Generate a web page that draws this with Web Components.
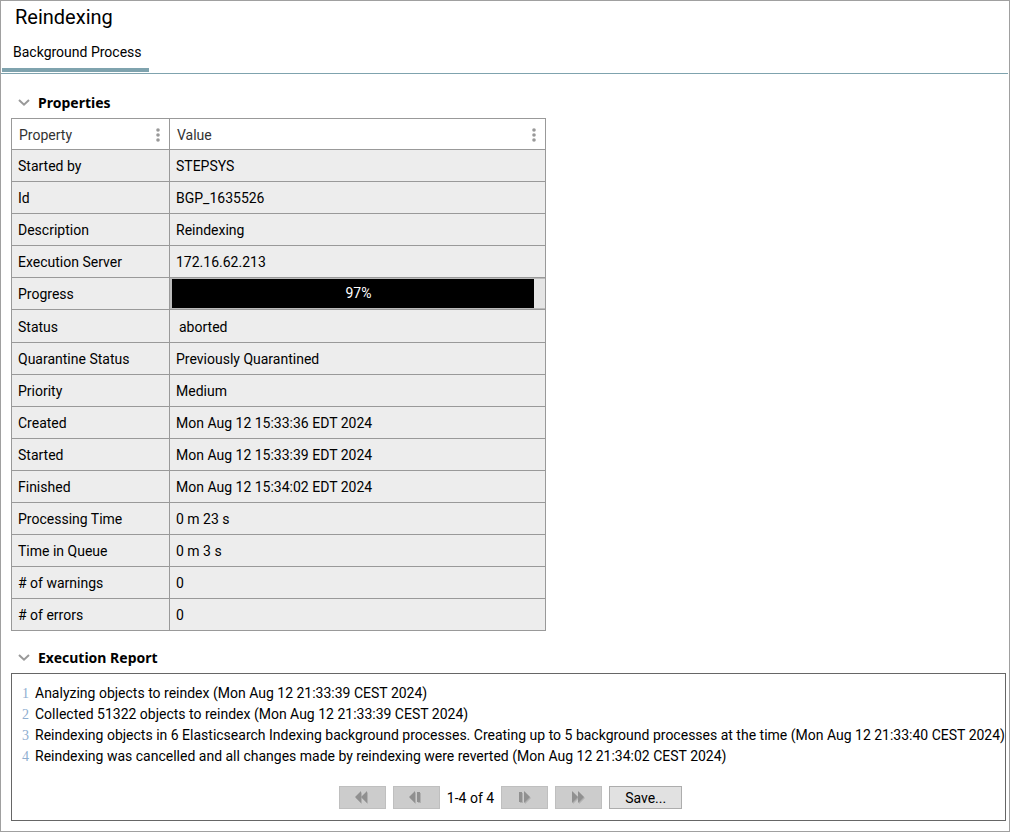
<!DOCTYPE html>
<html lang="en">
<head>
<meta charset="utf-8">
<title>Reindexing</title>
<style>
  html, body { height: 100%; margin: 0; }
  body { background: #fff; color: #000; font: 14px/20px Roboto, "Noto Sans", sans-serif; }
</style>
</head>
<body>
<process-page></process-page>

<script>
const define = (name, html, setup) => {
  const template = document.createElement('template');
  template.innerHTML = html;
  customElements.define(name, class extends HTMLElement {
    constructor() {
      super();
      this.attachShadow({ mode: 'open' }).append(template.content.cloneNode(true));
    }
    connectedCallback() { if (setup) setup(this, this.shadowRoot); }
  });
};

define('page-tab', `
  <style>
    :host { display: block; }
    button { display: block; height: 38px; border: 0; border-bottom: 4px solid #7fa3ae; padding: 2px 7px 0 11px; background: none; color: inherit; font: inherit; }
  </style>
  <button type="button" role="tab" aria-selected="true"><slot></slot></button>
`);

define('collapsible-section', `
  <style>
    :host { display: block; }
    h2 { margin: 0; font: inherit; }
    button { display: flex; align-items: center; gap: 8px; height: 24px; border: 0; padding: 0 0 0 7px; background: none; color: inherit; font: 700 14px/20px "Noto Sans", sans-serif; }
    svg { display: block; }
    .body { padding-top: 3px; }
  </style>
  <h2><button type="button" aria-expanded="true">
    <svg width="12" height="8" viewBox="0 0 12 8" fill="none" stroke="#999" stroke-width="2" aria-hidden="true"><path d="M1 1 6 5.700 11 1"/></svg>
    <span><slot name="heading"></slot></span>
  </button></h2>
  <div class="body"><slot></slot></div>
`);

define('progress-meter', `
  <style>
    :host { display: block; height: 29px; border: solid #bbb; border-width: 1px 0 1px 2px; background: #e5e5e5; color: #fff; }
    .track { display: grid; height: 29px; }
    .bar, .label { grid-area: 1 / 1; }
    .bar { background: #000; }
    .label { text-align: center; line-height: 28px; }
  </style>
  <div class="track" role="progressbar" aria-label="Progress"><div class="bar"></div><div class="label"></div></div>
`, (host, root) => {
  const value = host.getAttribute('value');
  root.querySelector('.track').setAttribute('aria-valuenow', value);
  root.querySelector('.bar').style.width = value + '%';
  root.querySelector('.label').textContent = value + '%';
});

define('property-table', `
  <style>
    :host { display: block; }
    table { width: 535px; max-width: 100%; border-collapse: collapse; table-layout: fixed; }
    col:first-child { width: 158px; }
    th, td { height: 31px; border: 1px solid #999; padding: 0 6px; font-weight: 400; text-align: left; }
    th { height: 29px; padding: 1px 7px 0; color: #333; }
    td { background: #ededed; }
    td.meter { padding: 0; }
    tr.tall td { height: 31px; padding-top: 1px; }
    td.indent { padding-left: 9px; }
    .head { display: flex; justify-content: space-between; align-items: center; }
    button { border: 0; padding: 0 2px; background: none; }
    svg { display: block; }
  </style>
  <table>
    <colgroup><col><col></colgroup>
    <thead><tr></tr></thead>
    <tbody></tbody>
  </table>
`, (host, root) => {
  root.querySelector('thead tr').innerHTML = ['Property', 'Value'].map(name => `
    <th scope="col"><div class="head"><span>${name}</span><button type="button" aria-label="${name} column menu">
      <svg width="4" height="14" viewBox="0 0 4 14" fill="#999"><circle cx="2" cy="2" r="1.8"/><circle cx="2" cy="7" r="1.8"/><circle cx="2" cy="12" r="1.8"/></svg>
    </button></div></th>`).join('');
  const rows = [
    ['Started by', 'STEPSYS'], ['Id', 'BGP_1635526'], ['Description', 'Reindexing'],
    ['Execution Server', '172.16.62.213'], ['Progress', null], ['Status', 'aborted'],
    ['Quarantine Status', 'Previously Quarantined'], ['Priority', 'Medium'],
    ['Created', 'Mon Aug 12 15:33:36 EDT 2024'], ['Started', 'Mon Aug 12 15:33:39 EDT 2024'],
    ['Finished', 'Mon Aug 12 15:34:02 EDT 2024'], ['Processing Time', '0 m 23 s'],
    ['Time in Queue', '0 m 3 s'], ['# of warnings', '0'], ['# of errors', '0']
  ];
  root.querySelector('tbody').innerHTML = rows.map(([name, value]) => {
    if (value === null) return `<tr><td>${name}</td><td class="meter"><progress-meter value="97"></progress-meter></td></tr>`;
    const status = name === 'Status';
    return `<tr${status ? ' class="tall"' : ''}><td>${name}</td><td${status ? ' class="indent"' : ''}>${value}</td></tr>`;
  }).join('');
});

define('push-button', `
  <style>
    :host { display: block; }
    button { display: flex; align-items: center; justify-content: center; box-sizing: border-box; width: 47px; height: 23px; border: 1px solid #bfbfbf; padding: 0; background: #ccc; color: inherit; font: inherit; }
    :host([wide]) button { width: 73px; border-color: #adadad; background: #e1e1e1; }
  </style>
  <button type="button"><slot></slot></button>
`, (host, root) => {
  const button = root.querySelector('button');
  if (host.hasAttribute('label')) button.setAttribute('aria-label', host.getAttribute('label'));
  button.disabled = host.hasAttribute('disabled');
});

const pagerIcon = path => `<svg width="14" height="13" viewBox="0 0 14 13" aria-hidden="true"><path d="${path}" transform="translate(1 1)" fill="#b0b0b0"/><path d="${path}" fill="#909090"/></svg>`;

define('report-pager', `
  <style>
    :host { display: flex; justify-content: center; align-items: center; gap: 7px; }
    svg { display: block; }
    .range { white-space: nowrap; }
  </style>
  <push-button disabled label="First page">${pagerIcon('M6 0v12L0 6zM12 0v12L6 6z')}</push-button>
  <push-button disabled label="Previous page">${pagerIcon('M6 0v12L0 6zM8 1h3v10H8z')}</push-button>
  <span class="range">1-4 of 4</span>
  <push-button disabled label="Next page">${pagerIcon('M6 0v12L12 6zM1 1h3v10H1z')}</push-button>
  <push-button disabled label="Last page">${pagerIcon('M0 0v12L6 6zM6 0v12L12 6z')}</push-button>
  <push-button wide>Save...</push-button>
`);

define('execution-report', `
  <style>
    :host { display: flex; flex-direction: column; justify-content: space-between; box-sizing: border-box; min-height: 148px; border: 1px solid #666; padding: 9px 6px 11px 10px; }
    ol { margin: 0; padding: 0; list-style: none; line-height: 21px; }
    li { display: flex; gap: 6px; white-space: nowrap; }
    .num { width: 7px; color: #8faed0; font-family: "Liberation Serif", serif; }
  </style>
  <ol></ol>
  <report-pager></report-pager>
`, (host, root) => {
  root.querySelector('ol').innerHTML = [
    'Analyzing objects to reindex (Mon Aug 12 21:33:39 CEST 2024)',
    'Collected 51322 objects to reindex (Mon Aug 12 21:33:39 CEST 2024)',
    'Reindexing objects in 6 Elasticsearch Indexing background processes. Creating up to 5 background processes at the time (Mon Aug 12 21:33:40 CEST 2024)',
    'Reindexing was cancelled and all changes made by reindexing were reverted (Mon Aug 12 21:34:02 CEST 2024)'
  ].map((text, i) => `<li><span class="num">${i + 1}</span><span>${text}</span></li>`).join('');
});

define('process-page', `
  <style>
    :host { display: block; box-sizing: border-box; min-height: 100%; border: 1px solid #a0a0a0; }
    h1 { margin: 0; padding: 2px 14px 3px; font-size: 20px; font-weight: 400; line-height: 28px; }
    .tabs { display: flex; margin-right: 1px; border-bottom: 1px solid #7fa3ae; padding: 0 0 1px 1px; }
    main { display: flex; flex-direction: column; gap: 15px; padding: 17px 3px 10px 10px; }
  </style>
  <h1>Reindexing</h1>
  <div class="tabs" role="tablist"><page-tab>Background Process</page-tab></div>
  <main>
    <collapsible-section><span slot="heading">Properties</span><property-table></property-table></collapsible-section>
    <collapsible-section><span slot="heading">Execution Report</span><execution-report></execution-report></collapsible-section>
  </main>
`);
</script>
</body>
</html>
